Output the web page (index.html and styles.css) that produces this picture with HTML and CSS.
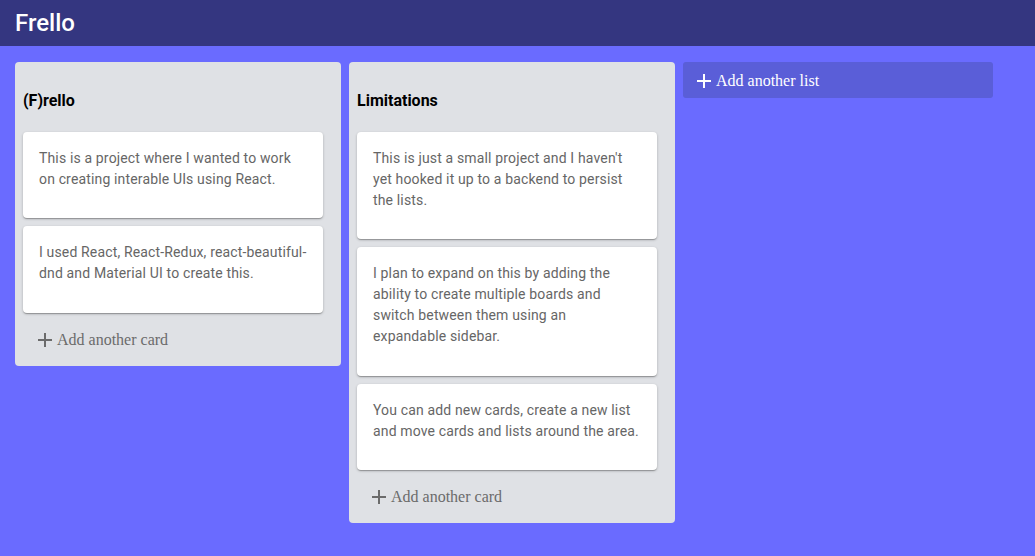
FILE: index.html
```html
<!DOCTYPE html>
<html>
<head>
<meta charset="utf-8">
<title>Frello</title>
<link rel="stylesheet" href="styles.css">
</head>
<body>
<header class="appbar">Frello</header>
<main class="board">
  <section class="list">
    <h4 class="list-title">(F)rello</h4>
    <div class="card"><p class="card-text">This is a project where I wanted to work on creating interable UIs using React.</p></div>
    <div class="card"><p class="card-text">I used React, React-Redux, react-beautiful-dnd and Material UI to create this.</p></div>
    <div class="add-card">
      <svg class="icon" viewBox="0 0 24 24"><path d="M19 13h-6v6h-2v-6H5v-2h6V5h2v6h6v2z"/></svg>
      <span>Add another card</span>
    </div>
  </section>
  <section class="list">
    <h4 class="list-title">Limitations</h4>
    <div class="card"><p class="card-text">This is just a small project and I haven't yet hooked it up to a backend to persist the lists.</p></div>
    <div class="card"><p class="card-text">I plan to expand on this by adding the ability to create multiple boards and switch between them using an expandable sidebar.</p></div>
    <div class="card"><p class="card-text">You can add new cards, create a new list and move cards and lists around the area.</p></div>
    <div class="add-card">
      <svg class="icon" viewBox="0 0 24 24"><path d="M19 13h-6v6h-2v-6H5v-2h6V5h2v6h6v2z"/></svg>
      <span>Add another card</span>
    </div>
  </section>
  <div class="add-list">
    <svg class="icon" viewBox="0 0 24 24"><path d="M19 13h-6v6h-2v-6H5v-2h6V5h2v6h6v2z"/></svg>
    <span>Add another list</span>
  </div>
</main>
</body>
</html>
```
FILE: styles.css
```css
html, body {
  margin: 0;
  padding: 0;
}
body {
  background: #6a6bff;
  min-height: 556px;
  font-family: Roboto, "Liberation Sans", sans-serif;
}
.appbar {
  height: 46px;
  line-height: 46px;
  background: #343680;
  color: #ffffff;
  font-size: 24px;
  font-weight: 500;
  padding-left: 15px;
}
.board {
  display: flex;
  align-items: flex-start;
  gap: 8px;
  padding: 16px 15px;
}
.list {
  box-sizing: border-box;
  width: 326px;
  background: #dfe1e5;
  border-radius: 4px;
  padding: 8px 8px 7px 8px;
}
.list-title {
  margin: 21px 0 22px 0;
  font-size: 16px;
  font-weight: 700;
  color: #000;
  line-height: 19px;
}
.card {
  width: 300px;
  box-sizing: border-box;
  background: #fff;
  border-radius: 4px;
  padding: 16px 16px 28.4px 16px;
  margin-bottom: 8px;
  box-shadow: 0 1px 3px 0 rgba(0,0,0,0.2), 0 1px 1px 0 rgba(0,0,0,0.14), 0 2px 1px -1px rgba(0,0,0,0.12);
}
.card-text {
  margin: 0;
  font-size: 14px;
  line-height: 21px;
  letter-spacing: 0.15px;
  color: #666666;
}
.add-card {
  display: flex;
  align-items: center;
  height: 38px;
  padding-left: 10px;
  color: #6b6b6b;
  font-family: "Liberation Serif", "Times New Roman", serif;
  font-size: 16px;
}
.add-card .icon {
  width: 24px;
  height: 24px;
  fill: #6b6b6b;
}
.add-list {
  display: flex;
  align-items: center;
  box-sizing: border-box;
  width: 310px;
  height: 36px;
  padding: 2px 0 0 9px;
  background: #5a5ed8;
  border-radius: 3px;
  color: #ffffff;
  font-family: "Liberation Serif", "Times New Roman", serif;
  font-size: 16px;
}
.add-list .icon {
  width: 24px;
  height: 24px;
  fill: #ffffff;
}
```
